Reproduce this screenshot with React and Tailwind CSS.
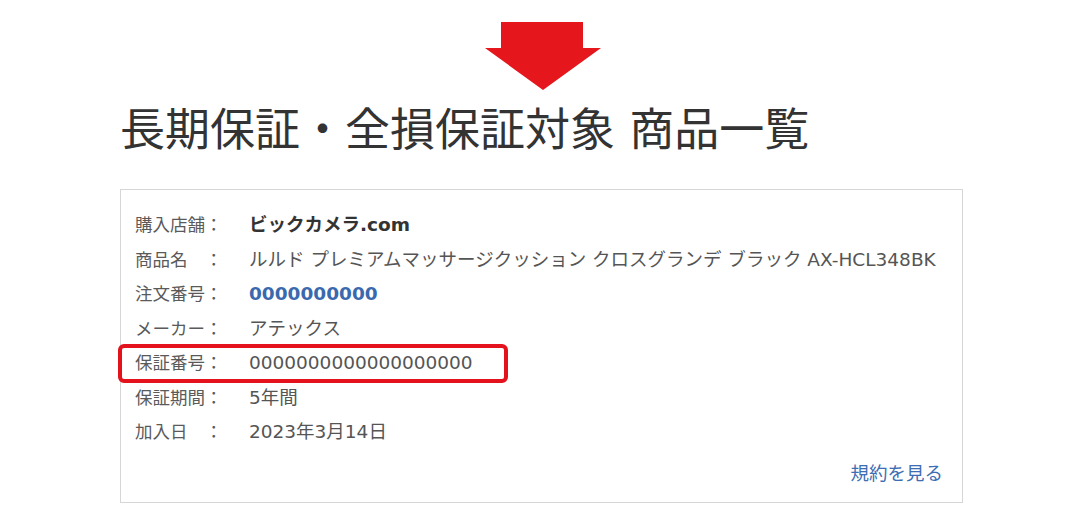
import React from 'react';

const FONT = { fontFamily: '"DejaVu Sans", "Noto Sans CJK JP", sans-serif' };

const rows = [
  { label: '購入店舗：', value: 'ビックカメラ.com', cls: 'font-bold text-[#333333]' },
  { label: '商品名　：', value: 'ルルド プレミアムマッサージクッション クロスグランデ ブラック AX-HCL348BK' },
  { label: '注文番号：', value: '0000000000', cls: 'font-bold text-[#3a69ad]' },
  { label: 'メーカー：', value: 'アテックス' },
  { label: '保証番号：', value: '0000000000000000000', mark: true },
  { label: '保証期間：', value: '5年間' },
  { label: '加入日　：', value: '2023年3月14日' },
];

const App = () => {
  return (
    <div className="w-[1084px] h-[519px] bg-white overflow-hidden" style={FONT}>
      {/* 矢印 */}
      <div className="flex justify-center pt-[22px] pl-[2px]">
        <svg width="116" height="68" viewBox="0 0 116 68">
          <polygon points="16,0 98,0 98,26 116,26 58,68 0,26 16,26" fill="#e5161c" />
        </svg>
      </div>

      <div className="pl-[120px]">
        <h1 className="text-[45px] leading-[60px] text-[#333333] mt-[11px] font-normal">
          長期保証・全損保証対象 商品一覧
        </h1>

        <div className="w-[843px] border border-[#d6d6d6] mt-[28px] pt-[18px] pl-[14px] pr-[19px] pb-[11px]">
          {rows.map((r) => (
            <div key={r.label} className="relative flex h-[34.5px] items-center text-[18.5px] text-[#555555]">
              {r.mark && (
                <div className="absolute left-[-17px] top-[-2px] w-[390px] h-[39px] border-[4px] border-[#e3121c] rounded-[6px]" />
              )}
              <span className="w-[114px] shrink-0 text-[17.5px] text-[#5a5a5a]">{r.label}</span>
              <span className={r.cls || ''}>{r.value}</span>
            </div>
          ))}
          <div className="flex justify-end mt-[7px] h-[34.5px] items-center">
            <a className="text-[18.5px] text-[#3d6db2] cursor-pointer">規約を見る</a>
          </div>
        </div>
      </div>
    </div>
  );
};

export default App;
